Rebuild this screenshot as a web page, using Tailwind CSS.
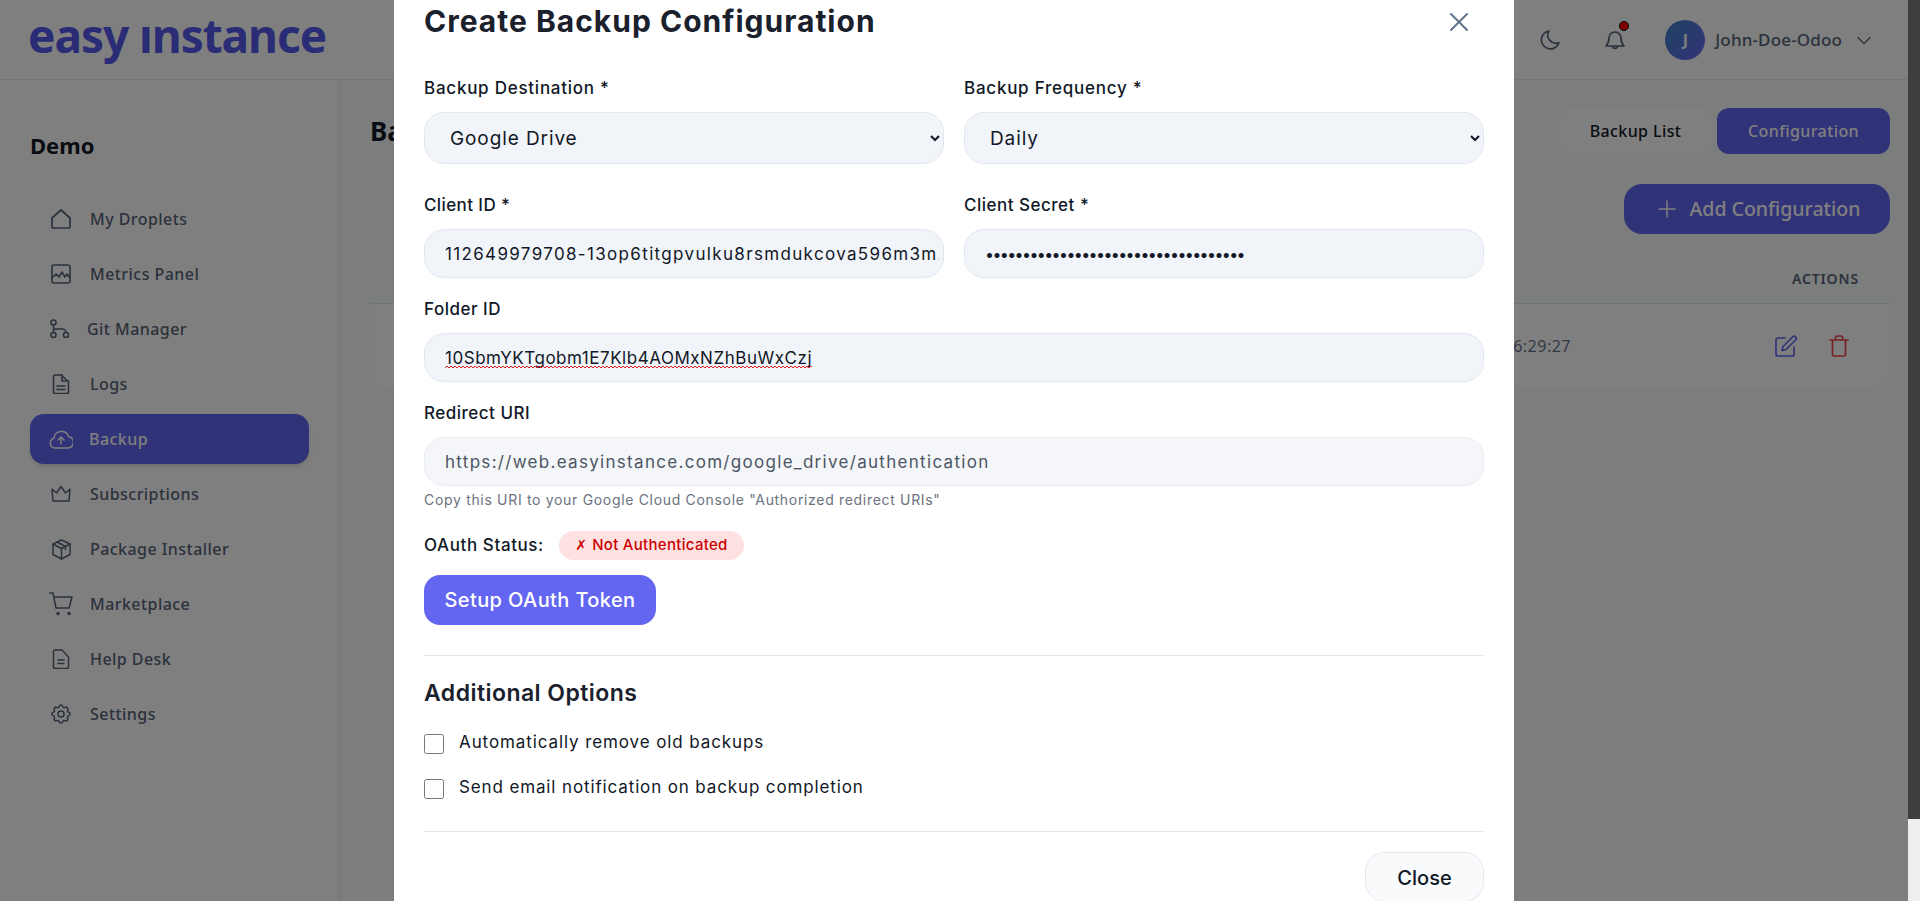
<!DOCTYPE html>
<html lang="en">
<head>
<meta charset="utf-8">
<title>Create Backup Configuration</title>
<script src="https://cdn.jsdelivr.net/npm/@tailwindcss/browser@4"></script>
</head>
<body class="h-[901px] overflow-hidden flex bg-white font-['Noto_Sans',sans-serif]">
<div class="relative w-[1908px] h-[901px] overflow-hidden bg-[#f9fafb]">
  <header class="h-[80px] bg-white border-b border-[#e2e8f0] flex items-center justify-between pl-[28px] pr-[36px]">
    <div class="text-[46px] leading-[56px] font-bold text-[#5558ea] tracking-[-1.05px] -mt-[10px] whitespace-pre">easy ınstance</div>
    <div class="flex items-center text-[#566479]">
      <svg class="w-[24px] h-[24px] mr-[41px]" viewBox="0 0 24 24" fill="none" stroke="currentColor" stroke-width="1.7" stroke-linecap="round" stroke-linejoin="round"><path d="M11 3a9 9 0 1 0 10 11.5A8 8 0 0 1 11 3z"/></svg>
      <div class="relative w-[24px] h-[24px] mr-[38px] mt-[3px]">
        <svg class="w-[24px] h-[24px]" viewBox="0 0 24 24" fill="none" stroke="currentColor" stroke-width="1.7" stroke-linecap="round" stroke-linejoin="round"><path d="M12 3a6 6 0 0 0-6 6c0 5-2 7-3 8h18c-1-1-3-3-3-8a6 6 0 0 0-6-6z"/><path d="M9.5 17.5a2.6 2.6 0 0 0 5 0"/></svg>
        <span class="absolute -top-[8px] left-[16px] w-[10px] h-[10px] rounded-full bg-[#ff0000] border border-black"></span>
      </div>
      <div class="w-[40px] h-[40px] rounded-full bg-linear-to-br from-[#3b82c4] to-[#6366f1] text-[#ffffff] flex items-center justify-center font-bold text-[16px] mr-[10px]">J</div>
      <span class="text-[17px] font-medium tracking-[0.15px]">John-Doe-Odoo</span>
      <svg class="w-[16px] h-[16px] ml-[14px]" viewBox="0 0 16 16" fill="none" stroke="currentColor" stroke-width="1.2" stroke-linecap="round" stroke-linejoin="round"><path d="M2 5.5l6 6 6-6"/></svg>
    </div>
  </header>
  <div class="flex h-[821px]">
    <aside class="w-[340px] bg-white border-r border-[#e2e8f0] pl-[30px] pr-[30px] shrink-0">
      <div class="mt-[50px] text-[22px] leading-[30px] font-bold text-[#111827]">Demo</div>
      <nav class="mt-[34px] text-[16px] font-medium tracking-[0.45px] text-[#566479] flex flex-col gap-[5px]">
        <a class="h-[50px] flex items-center gap-[19px] pl-[21px]"><svg class="w-[20px] h-[20px] shrink-0" viewBox="0 0 20 20" fill="none" stroke="currentColor" stroke-width="1.7" stroke-linejoin="round"><path d="M1 9l9-8 9 8v9a1 1 0 0 1-1 1H2a1 1 0 0 1-1-1z"/></svg>My Droplets</a>
        <a class="h-[50px] flex items-center gap-[19px] pl-[21px]"><svg class="w-[20px] h-[20px] shrink-0" viewBox="0 0 20 20" fill="none" stroke="currentColor" stroke-width="1.6" stroke-linejoin="round" stroke-linecap="round"><rect x="1" y="1" width="18" height="18" rx="2"/><path d="M1 14l4-4 3 3 3-5 3 5 2-3 3 4"/></svg>Metrics Panel</a>
        <a class="h-[50px] flex items-center gap-[17px] pl-[20px]"><svg class="w-[20px] h-[20px] shrink-0" viewBox="0 0 20 20" fill="none" stroke="currentColor" stroke-width="1.6"><circle cx="3.5" cy="3.5" r="2.5"/><circle cx="3.5" cy="16" r="2.5"/><circle cx="16" cy="16" r="2.5"/><path d="M3.5 6v7.5M3.500 10h9a3.500 3.500 0 0 1 3.500 3.500"/></svg>Git Manager</a>
        <a class="h-[50px] flex items-center gap-[19px] pl-[21px]"><svg class="w-[20px] h-[20px] shrink-0" viewBox="0 0 20 20" fill="none" stroke="currentColor" stroke-width="1.6" stroke-linejoin="round" stroke-linecap="round"><path d="M3 2.5A1.5 1.5 0 0 1 4.500 1H11l7 7v10a1.500 1.500 0 0 1-1.500 1.500h-12A1.500 1.500 0 0 1 3 18z" transform="translate(-0.5 0)"/><path d="M11 1v6h6.500M6 12h8M6 15.500h8"/></svg>Logs</a>
        <a class="h-[50px] flex items-center gap-[19px] pl-[20px] rounded-[14px] bg-[#6366f1] text-white shadow-md"><svg class="w-[24px] h-[20px] shrink-0 -ml-[1px] -mr-[3px]" viewBox="0 0 24 20" fill="none" stroke="currentColor" stroke-width="1.5" stroke-linecap="round" stroke-linejoin="round"><path d="M6 19a5 5 0 0 1-1-9.800A7.500 7.500 0 0 1 19.500 7.500 5.800 5.800 0 0 1 18 19z"/><path d="M12 15V8M9 11l3-3 3 3"/></svg>Backup</a>
        <a class="h-[50px] flex items-center gap-[19px] pl-[21px]"><svg class="w-[20px] h-[18px] shrink-0" viewBox="0 0 20 18" fill="none" stroke="currentColor" stroke-width="1.5" stroke-linejoin="round" stroke-linecap="round"><path d="M1 4l4.500 4L10 1.500 14.500 8 19 4l-1 12H2z"/></svg>Subscriptions</a>
        <a class="h-[50px] flex items-center gap-[18px] pl-[21px]"><svg class="w-[21px] h-[21px] shrink-0" viewBox="0 0 21 21" fill="none" stroke="currentColor" stroke-width="1.5" stroke-linejoin="round" stroke-linecap="round"><path d="M10.500 1L19 5v10.500L10.500 20 2 15.500V5z"/><path d="M2 5l8.500 4.500L19 5M10.500 9.500V20M6 3l8.500 4.500v3"/></svg>Package Installer</a>
        <a class="h-[50px] flex items-center gap-[18px] pl-[19px]"><svg class="w-[24px] h-[24px] shrink-0 -mr-[1px]" viewBox="0 0 24 24" fill="none" stroke="currentColor" stroke-width="1.5" stroke-linejoin="round" stroke-linecap="round"><path d="M1 1h3l3 15h13l3-11H5"/><circle cx="9" cy="21.500" r="1" fill="currentColor"/><circle cx="20" cy="21.500" r="1" fill="currentColor"/></svg>Marketplace</a>
        <a class="h-[50px] flex items-center gap-[19px] pl-[21px]"><svg class="w-[20px] h-[20px] shrink-0" viewBox="0 0 20 20" fill="none" stroke="currentColor" stroke-width="1.5" stroke-linejoin="round" stroke-linecap="round"><path d="M2.500 2.500A1.500 1.500 0 0 1 4 1h7l6.500 7v10A1.500 1.500 0 0 1 16 19.500H4A1.500 1.500 0 0 1 2.500 18z"/><path d="M7 11h6M7 14.500h6"/></svg>Help Desk</a>
        <a class="h-[50px] flex items-center gap-[17px] pl-[19px]"><svg class="w-[24px] h-[24px] shrink-0" viewBox="0 0 24 24" fill="none" stroke="currentColor" stroke-width="1.5" stroke-linejoin="round" stroke-linecap="round"><path d="M10.300 4.300c.4-1.800 3-1.800 3.400 0a1.700 1.700 0 0 0 2.600 1.100c1.500-.9 3.300.8 2.400 2.400a1.700 1.700 0 0 0 1 2.500c1.800.4 1.800 3 0 3.400a1.700 1.700 0 0 0-1 2.600c.9 1.500-.9 3.300-2.400 2.400a1.700 1.700 0 0 0-2.600 1c-.4 1.800-3 1.800-3.400 0a1.700 1.700 0 0 0-2.600-1c-1.500.9-3.300-.9-2.400-2.400a1.700 1.700 0 0 0-1-2.600c-1.800-.4-1.800-3 0-3.400a1.700 1.700 0 0 0 1-2.500c-.9-1.600.9-3.300 2.400-2.400a1.700 1.700 0 0 0 2.600-1.100z"/><circle cx="12" cy="12" r="3"/></svg>Settings</a>
      </nav>
    </aside>
    <main class="flex-1 pl-[30px] pr-[18px] relative">
      <div class="flex items-start justify-between pt-[28px]">
        <h1 class="text-[26px] leading-[46px] font-bold text-[#111827]">Backup</h1>
        <div class="flex gap-[5px] text-[16px] font-medium tracking-[0.4px]">
          <button class="w-[153px] h-[46px] rounded-[14px] bg-white text-[#111827]">Backup List</button>
          <button class="w-[173px] h-[46px] rounded-[12px] bg-[#6366f1] text-white">Configuration</button>
        </div>
      </div>
      <div class="flex justify-end mt-[30px]">
        <button class="w-[266px] h-[50px] rounded-[18px] bg-[#6366f1] text-white text-[19.5px] font-medium flex items-center justify-center gap-[14px] pl-[4px]"><svg class="w-[18px] h-[18px]" viewBox="0 0 18 18" fill="none" stroke="currentColor" stroke-width="1.5" stroke-linecap="round"><path d="M9 1v16M1 9h16"/></svg>Add Configuration</button>
      </div>
      <div class="flex justify-end h-[69px] items-center pt-[20px] pr-[31px] text-[14px] font-semibold tracking-[0.85px] text-[#566479]">ACTIONS</div>
      <div class="h-[84px] bg-white rounded-b-[16px] border-t border-[#dbe2f0] flex items-center justify-end pr-[41px]">
        <span class="text-[16px] tracking-[0.5px] text-[#64748b] mr-[204px]">16:29:27</span>
        <svg class="w-[22px] h-[22px] mr-[32px] text-[#6366f1]" viewBox="0 0 22 22" fill="none" stroke="currentColor" stroke-width="1.700" stroke-linecap="round" stroke-linejoin="round"><path d="M10 3H3a2 2 0 0 0-2 2v14a2 2 0 0 0 2 2h14a2 2 0 0 0 2-2v-7"/><path d="M18 1.500a2.200 2.200 0 0 1 3 3L11 14.500l-4 1 1-4z"/></svg>
        <svg class="w-[20px] h-[22px] text-[#ef4444]" viewBox="0 0 20 22" fill="none" stroke="currentColor" stroke-width="1.700" stroke-linecap="round" stroke-linejoin="round"><path d="M1 5h18M3.500 5v14.500A1.500 1.500 0 0 0 5 21h10a1.500 1.500 0 0 0 1.500-1.500V5M6.500 5V2.500A1.500 1.500 0 0 1 8 1h4a1.500 1.500 0 0 1 1.500 1.500V5"/></svg>
      </div>
    </main>
  </div>

  <div class="absolute inset-0 bg-black/50"></div>

  <div class="absolute left-[394px] top-0 w-[1120px] h-[901px] bg-white overflow-hidden px-[30px] font-[Inter,sans-serif] text-[#111827]">
    <div class="h-[44px] flex items-center justify-between pr-[14px]">
      <h2 class="text-[30px] leading-[44px] font-bold tracking-[1px] text-[#1a202c] -mt-[2px]">Create Backup Configuration</h2>
      <svg class="w-[22px] h-[22px] -mt-[1px] text-[#64748b]" viewBox="0 0 22 22" fill="none" stroke="currentColor" stroke-width="2" stroke-linecap="round"><path d="M3 3l16 16M19 3L3 19"/></svg>
    </div>
    <div class="grid grid-cols-2 gap-x-5 mt-[32px]">
      <div>
        <label class="block text-[17px] leading-[24px] font-medium tracking-[0.75px] mb-[12px]">Backup Destination *</label>
        <select class="block w-full h-[52px] rounded-[20px] bg-[#f1f4f9] border border-[#e2e8f0] pl-[21px] pr-[4px] text-[19px] text-[#111827] tracking-[0.9px]"><option>Google Drive</option></select>
      </div>
      <div>
        <label class="block text-[17px] leading-[24px] font-medium tracking-[0.75px] mb-[12px]">Backup Frequency *</label>
        <select class="block w-full h-[52px] rounded-[20px] bg-[#f1f4f9] border border-[#e2e8f0] pl-[21px] pr-[4px] text-[19px] text-[#111827] tracking-[0.9px]"><option>Daily</option></select>
      </div>
      <div class="mt-[29px]">
        <label class="block text-[17px] leading-[24px] font-medium tracking-[0.4px] mb-[12px]">Client ID *</label>
        <input class="block w-full h-[49px] rounded-[20px] bg-[#f1f4f9] border border-[#e2e8f0] pl-[20px] pr-[4px] text-[17px] text-[#111827] tracking-[1.34px]" value="112649979708-13op6titgpvulku8rsmdukcova596m3m.apps.googleusercontent.com">
      </div>
      <div class="mt-[29px]">
        <label class="block text-[17px] leading-[24px] font-medium tracking-[0.5px] mb-[12px]">Client Secret *</label>
        <input type="password" class="block w-full h-[49px] rounded-[20px] bg-[#f1f4f9] border border-[#e2e8f0] px-[20px] text-[16px] text-[#111827] tracking-[-1.6px]" value="GOCSPX-abcdefghijklmnopqrstuvwxyz12">
      </div>
    </div>
    <div class="mt-[19px]">
      <label class="block text-[17px] leading-[24px] font-medium tracking-[0.5px] mb-[12px]">Folder ID</label>
      <div class="relative">
        <input class="block w-full h-[49px] rounded-[20px] bg-[#f1f4f9] border border-[#e2e8f0] px-[20px] text-[17px] text-[#111827] tracking-[0.53px]" value="10SbmYKTgobm1E7Klb4AOMxNZhBuWxCzj">
        <svg class="absolute left-[21px] top-[32px] w-[367px] h-[4px]" fill="none"><defs><pattern id="spell" width="4" height="4" patternUnits="userSpaceOnUse"><path d="M0 3L2 1L4 3" stroke="#e11d1d" stroke-width="1"/></pattern></defs><rect width="367" height="4" fill="url(#spell)"/></svg>
      </div>
    </div>
    <div class="mt-[19px]">
      <label class="block text-[17px] leading-[24px] font-medium tracking-[0.5px] mb-[12px]">Redirect URI</label>
      <input readonly class="block w-full h-[49px] rounded-[20px] bg-[#f4f6f9] border border-[#e8ecf2] px-[20px] text-[17px] text-[#4b5563] tracking-[1.3px]" value="https://web.easyinstance.com/google_drive/authentication">
      <p class="mt-[4px] text-[14px] leading-[20px] text-[#6b7280] tracking-[0.68px]">Copy this URI to your Google Cloud Console "Authorized redirect URIs"</p>
    </div>
    <div class="mt-[21px] flex items-center h-[29px]">
      <span class="text-[17px] font-medium tracking-[0.6px]">OAuth Status:</span>
      <span class="ml-[15px] h-[29px] w-[185px] rounded-full bg-[#fee2e2] text-[#cc0000] text-[15px] font-medium flex items-center justify-center tracking-[0.3px]"><span class="font-['DejaVu_Sans',sans-serif] mr-[5px] text-[14px]">✗</span>Not Authenticated</span>
    </div>
    <button class="mt-[15px] block h-[50px] w-[232px] rounded-[16px] bg-[#6366f1] text-white text-[20px] font-medium tracking-[0.4px]">Setup OAuth Token</button>
    <div class="mt-[30px] border-t border-[#e5e7eb]"></div>
    <h3 class="mt-[22px] text-[23px] leading-[30px] font-semibold tracking-[0.45px] text-[#1a202c]">Additional Options</h3>
    <label class="mt-[24px] h-[24px] flex items-start gap-[15px] text-[17px] leading-[20px] tracking-[0.9px]"><input type="checkbox" class="w-[20px] h-[20px] m-0 mt-[2px] shrink-0">Automatically remove old backups</label>
    <label class="mt-[21px] h-[24px] flex items-start gap-[15px] text-[17px] leading-[20px] tracking-[0.87px]"><input type="checkbox" class="w-[20px] h-[20px] m-0 mt-[2px] shrink-0">Send email notification on backup completion</label>
    <div class="mt-[30px] border-t border-[#e5e7eb]"></div>
    <div class="flex justify-end mt-[20px]">
      <button class="w-[119px] h-[50px] rounded-[20px] bg-[#f8fafc] border border-[#e2e8f0] text-[20px] font-medium pt-[2px]">Close</button>
    </div>
  </div>
</div>
<div class="w-[12px] h-[901px] flex flex-col shrink-0">
  <div class="h-[819px] bg-[#3e3e3e]"></div>
  <div class="flex-1 bg-[#eeeeee]"></div>
</div>
</body>
</html>
